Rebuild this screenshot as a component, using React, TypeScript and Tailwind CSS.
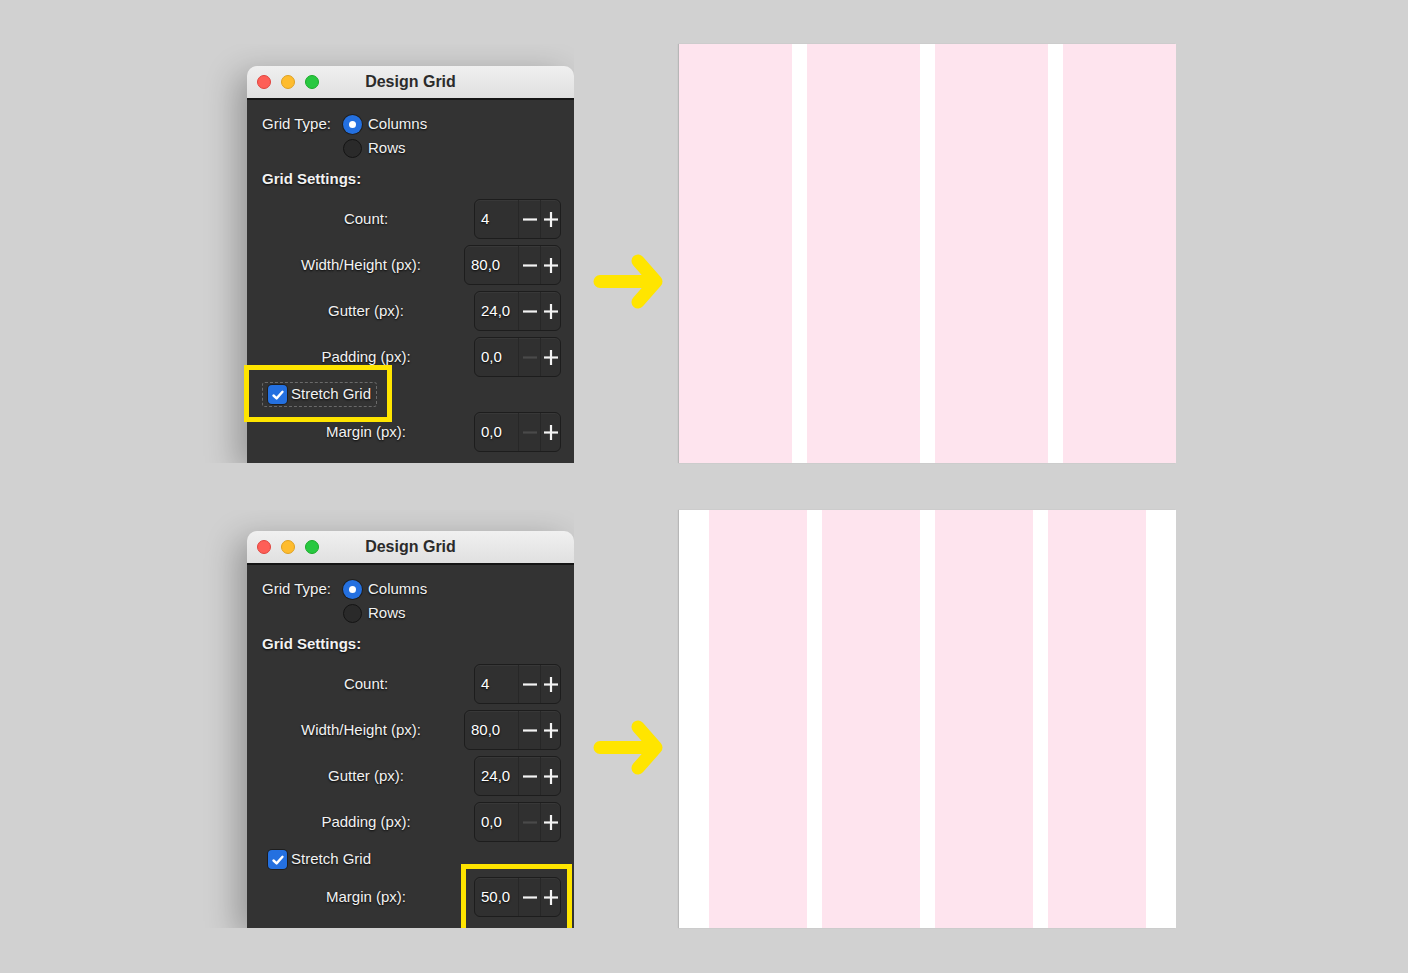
import React from "react";

const FONT = { fontFamily: '"Liberation Sans", Arial, sans-serif' };

const Minus = ({ dim }: { dim?: boolean }) => (
  <svg width="16" height="16" viewBox="0 0 16 16">
    <line x1="1" y1="8.5" x2="15" y2="8.5" stroke={dim ? "#4a4a4a" : "#f4f4f4"} strokeWidth="2.2" />
  </svg>
);

const Plus = () => (
  <svg width="16" height="16" viewBox="0 0 16 16">
    <line x1="1" y1="8.5" x2="15" y2="8.5" stroke="#f4f4f4" strokeWidth="2.2" />
    <line x1="8" y1="1" x2="8" y2="16" stroke="#f4f4f4" strokeWidth="2.2" />
  </svg>
);

const Stepper = ({ value, wide, dim }: { value: string; wide?: boolean; dim?: boolean }) => (
  <div
    className={`flex h-[40px] items-stretch rounded-[6px] border border-[#1d1d1d] bg-[#303030] shadow-[inset_0_1px_0_rgba(255,255,255,0.04)] ${
      wide ? "w-[97px]" : "w-[87px]"
    }`}
  >
    <div className="flex flex-1 items-center pl-[6px] text-[15px] text-white [text-shadow:0_1px_2px_rgba(0,0,0,0.9)]">
      {value}
    </div>
    <div className="flex w-[22px] items-center justify-center border-l border-[#272727]">
      <Minus dim={dim} />
    </div>
    <div className="flex w-[20px] items-center justify-center border-l border-[#272727]">
      <Plus />
    </div>
  </div>
);

const Row = ({ label, children }: { label: string; children: React.ReactNode }) => (
  <div className="flex h-[40px] items-center">
    <div className="flex-1 pr-[4px] text-center text-[15px] text-[#f2f2f2] [text-shadow:0_1px_2px_rgba(0,0,0,0.9)]">
      {label}
    </div>
    {children}
  </div>
);

const Check = () => (
  <div className="flex h-[19px] w-[19px] items-center justify-center rounded-[4px] bg-[#2470e0] shadow-[0_0_0_1px_rgba(0,0,0,0.4)]">
    <svg width="14" height="14" viewBox="0 0 14 14">
      <path d="M2.5 7.5 L5.6 10.4 L11.5 3.8" fill="none" stroke="#fff" strokeWidth="2.4" strokeLinecap="round" strokeLinejoin="round" />
    </svg>
  </div>
);

const Window = ({ second }: { second?: boolean }) => (
  <div className="relative flex h-full w-[327px] flex-col rounded-t-[10px] shadow-[-10px_8px_32px_rgba(0,0,0,0.28)]" style={FONT}>
    <div className="relative flex h-[34px] items-center rounded-t-[10px] border-b-2 border-[#151515] bg-gradient-to-b from-[#f0f0f0] to-[#e0e0e0] px-[10px]">
      <div className="flex gap-[10px]">
        <span className="h-[14px] w-[14px] rounded-full border border-[#e0443e] bg-[#fe5f57]" />
        <span className="h-[14px] w-[14px] rounded-full border border-[#dea123] bg-[#febc2e]" />
        <span className="h-[14px] w-[14px] rounded-full border border-[#1aab29] bg-[#28c840]" />
      </div>
      <div className="absolute inset-x-0 top-0 flex h-full items-center justify-center text-[16px] font-bold text-[#2b2b2b]">
        Design Grid
      </div>
    </div>
    <div className="relative flex-1 overflow-hidden bg-[#333333] pl-[15px] pr-[13px] pt-[12px] text-[#f2f2f2] [text-shadow:0_1px_2px_rgba(0,0,0,0.9)]">
      <div className="flex">
        <div className="w-[81px] pt-[1px] text-[15px]">Grid Type:</div>
        <div className="flex flex-col">
          <div className="flex h-[24px] items-center gap-[6px]">
            <span className="flex h-[19px] w-[19px] items-center justify-center rounded-full bg-[#2470e0] shadow-[0_0_0_1px_rgba(0,0,0,0.4)]">
              <span className="h-[7px] w-[7px] rounded-full bg-white" />
            </span>
            <span className="text-[15px]">Columns</span>
          </div>
          <div className="flex h-[24px] items-center gap-[6px]">
            <span className="h-[19px] w-[19px] rounded-full border border-[#141414] bg-[#2a2a2a]" />
            <span className="text-[15px]">Rows</span>
          </div>
        </div>
      </div>
      <div className="mt-[7px] flex h-[24px] items-center text-[15px] font-bold">Grid Settings:</div>
      <div className="mt-[8px] flex flex-col gap-[6px]">
        <Row label="Count:">
          <Stepper value="4" />
        </Row>
        <Row label="Width/Height (px):">
          <Stepper value="80,0" wide />
        </Row>
        <Row label="Gutter (px):">
          <Stepper value="24,0" />
        </Row>
        <Row label="Padding (px):">
          <Stepper value="0,0" dim />
        </Row>
      </div>
      <div className="mt-[5px] flex h-[25px] items-center">
        <div
          className={`flex h-[25px] items-center gap-[4px] rounded-[3px] pl-[5px] pr-[5px] ${
            second ? "border border-transparent" : "border border-dashed border-[#6a6a6a]"
          }`}
        >
          <Check />
          <span className="text-[15px]">Stretch Grid</span>
        </div>
      </div>
      <div className="mt-[5px]">
        <Row label="Margin (px):">
          <Stepper value={second ? "50,0" : "0,0"} dim={!second} />
        </Row>
      </div>
    </div>
  </div>
);

const Arrow = () => (
  <svg width="72" height="56" viewBox="0 0 72 56" className="mt-[209px] ml-[19px] shrink-0">
    <path d="M7 28.5 H63 M45 8 L63 28.5 L45 49" fill="none" stroke="#ffe500" strokeWidth="13" strokeLinecap="round" strokeLinejoin="round" />
  </svg>
);

const GridPanel = ({ margin }: { margin?: boolean }) => (
  <div className={`flex h-full w-[497px] gap-[15px] bg-white shadow-[-1px_0_1px_rgba(0,0,0,0.12)] ${margin ? "px-[30px]" : ""}`}>
    {[0, 1, 2, 3].map((i) => (
      <div key={i} className="flex-1 bg-[#fee4ee]" />
    ))}
  </div>
);

export default function App() {
  return (
    <div className="flex h-[973px] w-[1408px] flex-col gap-[47px] bg-[#d1d1d1] pt-[44px]">
      <div className="flex h-[419px]">
        <div className="relative ml-[190px] h-full overflow-hidden pl-[57px] pt-[22px]">
          <Window />
          <div className="absolute left-[54px] top-[321px] h-[57px] w-[148px] border-[5px] border-[#ffe500]" />
        </div>
        <Arrow />
        <div className="ml-[14px] h-full">
          <GridPanel />
        </div>
      </div>
      <div className="flex h-[418px]">
        <div className="relative ml-[190px] h-full overflow-hidden pl-[57px] pt-[21px]">
          <Window second />
          <div className="absolute left-[271px] top-[354px] h-[70px] w-[111px] border-[5px] border-b-0 border-[#ffe500]" />
        </div>
        <Arrow />
        <div className="ml-[14px] h-full">
          <GridPanel margin />
        </div>
      </div>
    </div>
  );
}
